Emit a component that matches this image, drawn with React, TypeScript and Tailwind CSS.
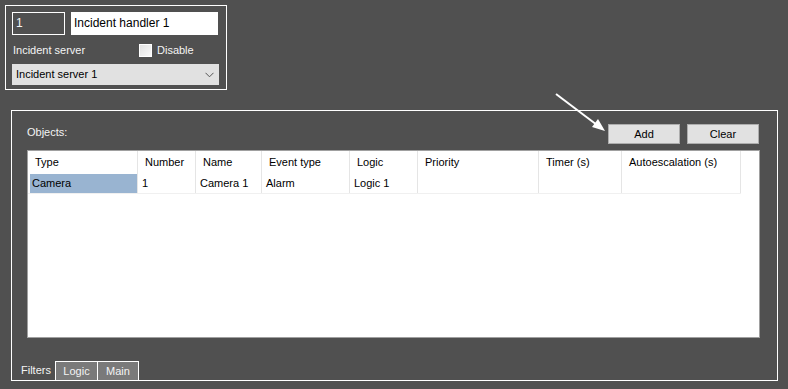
import React from "react";

const cols = [
  { h: "Type", w: 110, v: "Camera", sel: true },
  { h: "Number", w: 58, v: "1" },
  { h: "Name", w: 66, v: "Camera 1" },
  { h: "Event type", w: 88, v: "Alarm" },
  { h: "Logic", w: 68, v: "Logic 1" },
  { h: "Priority", w: 121, v: "" },
  { h: "Timer (s)", w: 83, v: "" },
  { h: "Autoescalation (s)", w: 119, v: "" },
];

export default function App() {
  return (
    <div
      className="relative w-[788px] h-[389px] bg-[#505050] overflow-hidden text-[11px] text-[#f4f4f4]"
      style={{ fontFamily: '"Liberation Sans", Arial, sans-serif' }}
    >
      <div className="pt-[5px] pl-[5px]">
        <div className="w-[222px] h-[85px] border border-white px-[6px] pt-[6px] flex flex-col">
          <div className="flex gap-[6px] text-[12px]">
            <div className="w-[53px] h-[23px] border border-white bg-[#505050] pl-[3px] leading-[21px]">1</div>
            <div className="w-[147px] h-[23px] bg-white text-black pl-[3px] leading-[23px]">Incident handler 1</div>
          </div>
          <div className="flex items-center h-[21px] mt-[5px]">
            <span className="pl-[1px] w-[127px]">Incident server</span>
            <span className="w-[13px] h-[13px] border border-white bg-gradient-to-br from-[#e2e2e2] to-[#fafafa]"></span>
            <span className="ml-[5px]">Disable</span>
          </div>
          <div className="mt-[3px] w-[207px] h-[21px] bg-[#e1e1e1] text-black pl-[4px] flex items-center justify-between pr-[4px]">
            <span>Incident server 1</span>
            <svg width="9" height="6" viewBox="0 0 9 6" className="mr-[1px]">
              <path d="M0.5 0.8 L4.5 4.8 L8.5 0.8" fill="none" stroke="#555" strokeWidth="1" />
            </svg>
          </div>
        </div>
      </div>

      <div className="pl-[11px] pt-[20px]">
        <div className="w-[767px] h-[271px] border border-white flex flex-col">
          <div className="flex items-end h-[33px] pl-[15px] pr-[18px]">
            <span className="mb-[4px]">Objects:</span>
            <div className="ml-auto flex gap-[7px]">
              <div className="w-[72px] h-[20px] bg-[#e1e1e1] border border-[#adadad] text-black flex items-center justify-center">Add</div>
              <div className="w-[72px] h-[20px] bg-[#e1e1e1] border border-[#adadad] text-black flex items-center justify-center">Clear</div>
            </div>
          </div>
          <div className="ml-[15px] mt-[6px] w-[733px] h-[188px] bg-white border border-[#a0a0a0] text-black">
            <div className="flex h-[23px]">
              {cols.map((c, i) => (
                <div
                  key={i}
                  className="border-r border-[#e5e5e5] pl-[7px] leading-[23px] whitespace-nowrap"
                  style={{ width: c.w }}
                >
                  {c.h}
                </div>
              ))}
            </div>
            <div className="flex h-[20px] border-b border-[#f0f0f0] w-[713px]">
              {cols.map((c, i) => (
                <div
                  key={i}
                  className="border-r border-[#e5e5e5] whitespace-nowrap flex"
                  style={{ width: c.w }}
                >
                  <div
                    className={
                      c.sel
                        ? "bg-[#99b4d1] w-full ml-[2px] pl-[2px] leading-[19px]"
                        : "pl-[4px] leading-[19px]"
                    }
                  >
                    {c.v}
                  </div>
                </div>
              ))}
            </div>
          </div>
          <div className="flex mt-auto pl-[8px] h-[19px]">
            <div className="w-[35px] leading-[19px] pl-[1px]">Filters</div>
            <div className="w-[43px] h-[19px] bg-[#7a7a7a] border border-white border-b-0 leading-[18px] text-center">Logic</div>
            <div className="w-[41px] h-[19px] bg-[#7a7a7a] border border-white border-b-0 border-l-0 leading-[18px] text-center">Main</div>
          </div>
        </div>
      </div>

      <svg className="absolute left-0 top-0 pointer-events-none" width="788" height="389">
        <line x1="556" y1="94" x2="601" y2="128" stroke="white" strokeWidth="2" />
        <polygon points="605,131 592,127 598,119" fill="white" />
      </svg>
    </div>
  );
}
